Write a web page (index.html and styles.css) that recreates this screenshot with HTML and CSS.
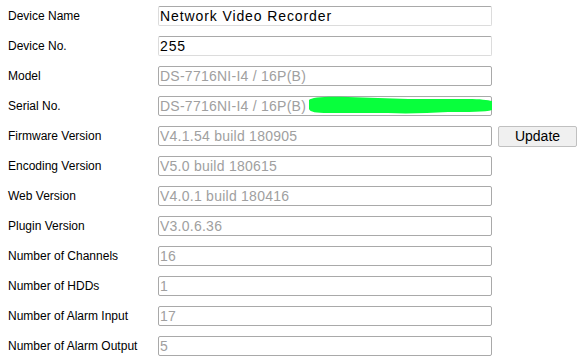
FILE: index.html
```html
<!DOCTYPE html>
<html>
<head>
<meta charset="utf-8">
<link rel="stylesheet" href="styles.css">
</head>
<body>
<div class="form">
  <div class="row"><label>Device Name</label><input class="field active" value="Network Video Recorder"></div>
  <div class="row"><label>Device No.</label><input class="field active" value="255"></div>
  <div class="row"><label>Model</label><input class="field" disabled value="DS-7716NI-I4 / 16P(B)"></div>
  <div class="row"><label>Serial No.</label>
    <div class="wrap"><input class="field" disabled value="DS-7716NI-I4 / 16P(B)">
      <svg class="scribble" width="186" height="20" viewBox="0 0 186 20"><path d="M1 4 C3 1 20 0 40 1 C60 2 80 2 100 3 C120 3 140 3 160 3 C172 3 180 4 184 5 L184 14 C178 16 160 16 140 16 C120 17 100 18 80 17 C60 17 40 17 20 17 C8 17 2 16 1 13 Z" fill="#08ff3c"/></svg>
    </div>
  </div>
  <div class="row"><label>Firmware Version</label><input class="field" disabled value="V4.1.54 build 180905"><button class="btn">Update</button></div>
  <div class="row"><label>Encoding Version</label><input class="field" disabled value="V5.0 build 180615"></div>
  <div class="row"><label>Web Version</label><input class="field" disabled value="V4.0.1 build 180416"></div>
  <div class="row"><label>Plugin Version</label><input class="field" disabled value="V3.0.6.36"></div>
  <div class="row"><label>Number of Channels</label><input class="field" disabled value="16"></div>
  <div class="row"><label>Number of HDDs</label><input class="field" disabled value="1"></div>
  <div class="row"><label>Number of Alarm Input</label><input class="field" disabled value="17"></div>
  <div class="row"><label>Number of Alarm Output</label><input class="field" disabled value="5"></div>
</div>
</body>
</html>
```
FILE: styles.css
```css
html, body {
  margin: 0;
  padding: 0;
  background: #fff;
}
body {
  font-family: "Liberation Sans", Arial, sans-serif;
  font-size: 12px;
  color: #000;
}
.form {
  display: flex;
  flex-direction: column;
  gap: 10px;
  padding-top: 6px;
}
.row {
  display: flex;
  align-items: center;
  height: 20px;
}
label {
  width: 150px;
  padding-left: 8px;
  flex: none;
}
.wrap {
  position: relative;
  width: 334px;
  height: 20px;
}
.field {
  box-sizing: border-box;
  width: 334px;
  height: 20px;
  margin: 0;
  padding: 0 1px;
  border: 1px solid #a9a9a9;
  border-radius: 2px;
  font-family: "Liberation Sans", Arial, sans-serif;
  font-size: 14px;
  letter-spacing: 0.25px;
  color: #a0a0a0;
  background: #fff;
  outline: none;
}
.field.active {
  color: #000;
  letter-spacing: 0.9px;
  border-color: #dcdcdc;
  border-top-color: #a9a9a9;
}
.scribble {
  position: absolute;
  left: 150px;
  top: 0;
}
.btn {
  box-sizing: border-box;
  margin-left: 6px;
  width: 79px;
  height: 21px;
  border: 1px solid #c0c0c0;
  border-radius: 2px;
  background: #f0f0f0;
  font-family: "Liberation Sans", Arial, sans-serif;
  font-size: 14px;
  color: #000;
  padding: 0;
}
```
